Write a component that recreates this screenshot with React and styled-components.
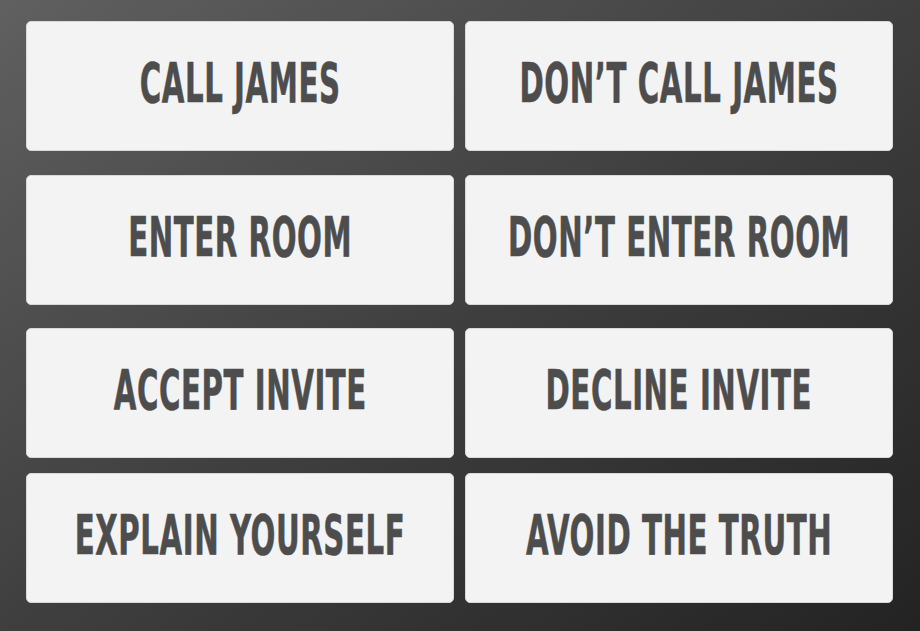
import styled, { createGlobalStyle } from 'styled-components'

const Global = createGlobalStyle`
html, body {
  margin: 0;
  padding: 0;
}
body {
  width: 920px;
  height: 631px;
  overflow: hidden;
}
`

const Page = styled.div`
width: 920px;
height: 631px;
box-sizing: border-box;
padding: 21px 28px 0 26px;
background: linear-gradient(to bottom right, #606060 0%, #3f3f3f 50%, #232323 100%);
display: flex;
flex-direction: column;
`

const Row = styled.div`
display: grid;
grid-template-columns: 428px 428px;
column-gap: 11px;
margin-top: ${p => p.$gap || 0}px;
`

const Choice = styled.button`
height: 130px;
box-sizing: border-box;
padding: 0 0 6px;
border: 1px solid #d8d8d8;
border-radius: 5px;
background-color: #f3f3f3;
display: flex;
align-items: center;
justify-content: center;
overflow: visible;
cursor: pointer;
`

const Label = styled.span`
display: inline-block;
white-space: nowrap;
font-family: "DejaVu Sans Condensed", "DejaVu Sans", sans-serif;
font-weight: bold;
font-size: 56px;
line-height: 1;
letter-spacing: 1px;
color: #4d4d4d;
-webkit-text-stroke: 0.6px #4d4d4d;
transform: scaleX(0.58);
`

const rows = [
  ['CALL JAMES', 'DON’T CALL JAMES'],
  ['ENTER ROOM', 'DON’T ENTER ROOM'],
  ['ACCEPT INVITE', 'DECLINE INVITE'],
  ['EXPLAIN YOURSELF', 'AVOID THE TRUTH'],
]

const gaps = [0, 24, 23, 15]

const App = () => {
  return (
    <>
      <Global />
      <Page>
        {rows.map((pair, i) => (
          <Row key={i} $gap={gaps[i]}>
            {pair.map(text => (
              <Choice key={text}>
                <Label>{text}</Label>
              </Choice>
            ))}
          </Row>
        ))}
      </Page>
    </>
  )
}

export default App
